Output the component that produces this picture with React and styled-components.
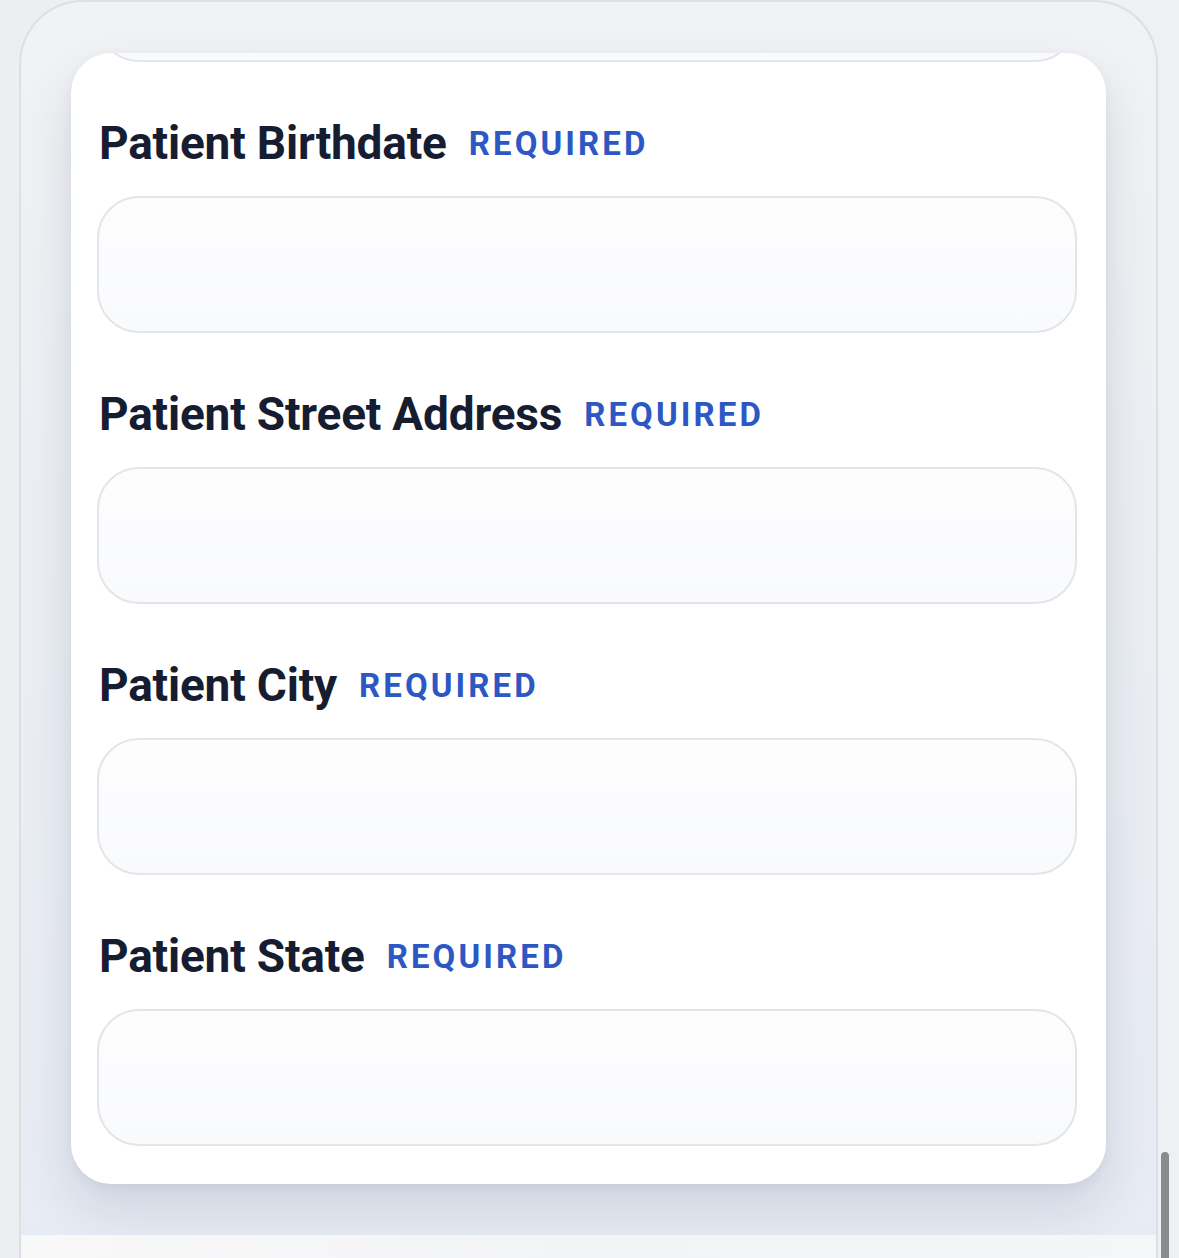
import React from 'react';
import styled, { createGlobalStyle } from 'styled-components';

const Global = createGlobalStyle`
  html, body { margin: 0; padding: 0; background: #eff0f2; }
  body { font-family: Roboto, "Noto Sans", sans-serif; overflow: hidden; }
  #root { width: 1179px; height: 1258px; }
`;

const Page = styled.div`
  position: relative;
  width: 1179px;
  height: 1258px;
  overflow: hidden;
  box-sizing: border-box;
  padding-left: 19px;
  background: linear-gradient(90deg, #eceef1 0%, #f1f2f4 50%, #eef0f3 100%);
`;

const Frame = styled.div`
  width: 1139px;
  height: 1300px;
  box-sizing: border-box;
  border: 2px solid #dcdfe4;
  border-bottom: none;
  border-radius: 64px 64px 0 0;
  background: linear-gradient(180deg, #f1f2f4 0%, #eceff3 35%, #e7ebf3 100%);
  padding-top: 51px;
  display: flex;
  flex-direction: column;
`;

const Card = styled.div`
  margin: 0 50px;
  height: 1131px;
  flex-shrink: 0;
  border-radius: 40px;
  overflow: hidden;
  background: #ffffff;
  box-shadow: 0 26px 50px rgba(40, 55, 95, 0.13), 0 4px 12px rgba(40, 55, 95, 0.05);
`;

const Content = styled.div`
  display: flex;
  flex-direction: column;
  padding: 0 29px 0 26px;
`;

const Field = styled.div`
  display: flex;
  flex-direction: column;
  margin-top: ${(p) => (p.$first ? '54px' : '54px')};
`;

const LabelRow = styled.div`
  display: flex;
  align-items: center;
  gap: 22px;
  height: 54px;
  margin-bottom: 26px;
  padding-left: 2px;
`;

const Label = styled.span`
  font-family: Roboto, "Noto Sans", sans-serif;
  font-weight: 700;
  font-size: 46px;
  line-height: 54px;
  color: #161d30;
  letter-spacing: -0.2px;
`;

const Required = styled.span`
  font-family: Roboto, "Noto Sans", sans-serif;
  font-weight: 700;
  font-size: 33px;
  line-height: 40px;
  letter-spacing: 3.1px;
  color: #2d58c4;
  padding-top: 2px;
`;

const Input = styled.div`
  height: 137px;
  box-sizing: border-box;
  border: 2px solid #e3e5e9;
  border-radius: 42px;
  background: linear-gradient(180deg, #fdfdfe 0%, #f9fafc 100%);
  margin-top: ${(p) => (p.$partial ? '-128px' : '0')};
`;

const Footer = styled.div`
  margin-top: 51px;
  flex: 1;
  background: linear-gradient(90deg, #f8f8f9 0%, #f3f4f6 50%, #f5f6f8 100%);
`;

const Scrollbar = styled.div`
  position: absolute;
  left: 1161px;
  top: 1152px;
  width: 8px;
  height: 130px;
  border-radius: 4px;
  background: #8a8b8d;
`;

const fields = [
  'Patient Birthdate',
  'Patient Street Address',
  'Patient City',
  'Patient State',
];

export default function App() {
  return (
    <>
      <Global />
      <Page>
        <Frame>
          <Card>
            <Content>
              <Input $partial />
              {fields.map((f, i) => (
                <Field key={f} $first={i === 0}>
                  <LabelRow>
                    <Label>{f}</Label>
                    <Required>REQUIRED</Required>
                  </LabelRow>
                  <Input />
                </Field>
              ))}
            </Content>
          </Card>
          <Footer />
        </Frame>
        <Scrollbar />
      </Page>
    </>
  );
}
